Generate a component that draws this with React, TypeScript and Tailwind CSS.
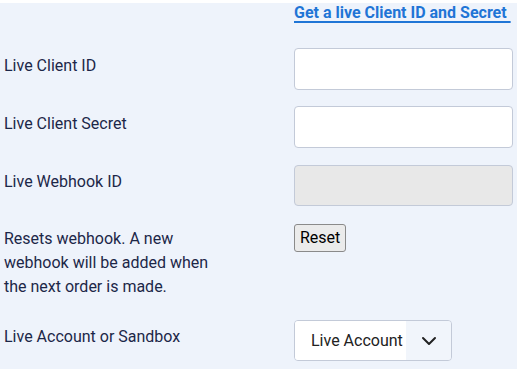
import React from "react";

export default function App() {
  return (
    <div className="w-[521px] h-[369px] bg-white overflow-hidden" style={{ fontFamily: "Roboto, 'Liberation Sans', sans-serif" }}>
      <div className="mt-[3px] w-[517px] h-[366px] bg-[#eef3fb] text-[#1c2748]">
        {/* link row */}
        <div className="flex">
          <div className="w-[294px]" />
          <a href="#" className="text-[16px] leading-[20px] font-bold text-[#1f75d6] underline underline-offset-[3px] decoration-[1.5px] whitespace-pre">
            {"Get a live Client ID and Secret "}
          </a>
        </div>
        {/* row 1 */}
        <div className="flex mt-[25px]">
          <div className="w-[294px] pl-[4px] pt-[6px] text-[16px] leading-[24px]">Live Client ID</div>
          <input className="w-[219px] h-[42px] bg-white border border-[#c3cad8] rounded-[4px]" />
        </div>
        {/* row 2 */}
        <div className="flex mt-[16px]">
          <div className="w-[294px] pl-[4px] pt-[6px] text-[16px] leading-[24px]">Live Client Secret</div>
          <input className="w-[219px] h-[42px] bg-white border border-[#c3cad8] rounded-[4px]" />
        </div>
        {/* row 3 */}
        <div className="flex mt-[17px]">
          <div className="w-[294px] pl-[4px] pt-[5px] text-[16px] leading-[24px]">Live Webhook ID</div>
          <input disabled className="w-[219px] h-[41px] bg-[#e8e8e8] border border-[#c3cad8] rounded-[4px]" />
        </div>
        {/* row 4 */}
        <div className="flex mt-[18px]">
          <div className="w-[294px] pl-[4px] pt-[3px] text-[16px] leading-[24px]">
            <div className="w-[215px]">Resets webhook. A new webhook will be added when the next order is made.</div>
          </div>
          <button className="h-[28px] px-[5px] bg-[#ebebeb] border border-[#8a8a8a] rounded-[3px] text-[16px] leading-[20px] text-black">Reset</button>
        </div>
        {/* row 5 */}
        <div className="flex mt-[21px]">
          <div className="w-[294px] pl-[4px] pt-[5px] text-[16px] leading-[24px]">Live Account or Sandbox</div>
          <div className="w-[158px] h-[41px] flex border border-[#c3cad8] rounded-[4px] overflow-hidden">
            <div className="w-[111px] bg-white pl-[16px] flex items-center text-[16px] text-[#222]">Live Account</div>
            <div className="flex-1 bg-[#f1f5fb] flex items-center justify-center">
              <svg width="16" height="10" viewBox="0 0 16 10" fill="none">
                <path d="M2 2 L8 8 L14 2" stroke="#222" strokeWidth="2" strokeLinecap="round" strokeLinejoin="round" />
              </svg>
            </div>
          </div>
        </div>
      </div>
    </div>
  );
}
